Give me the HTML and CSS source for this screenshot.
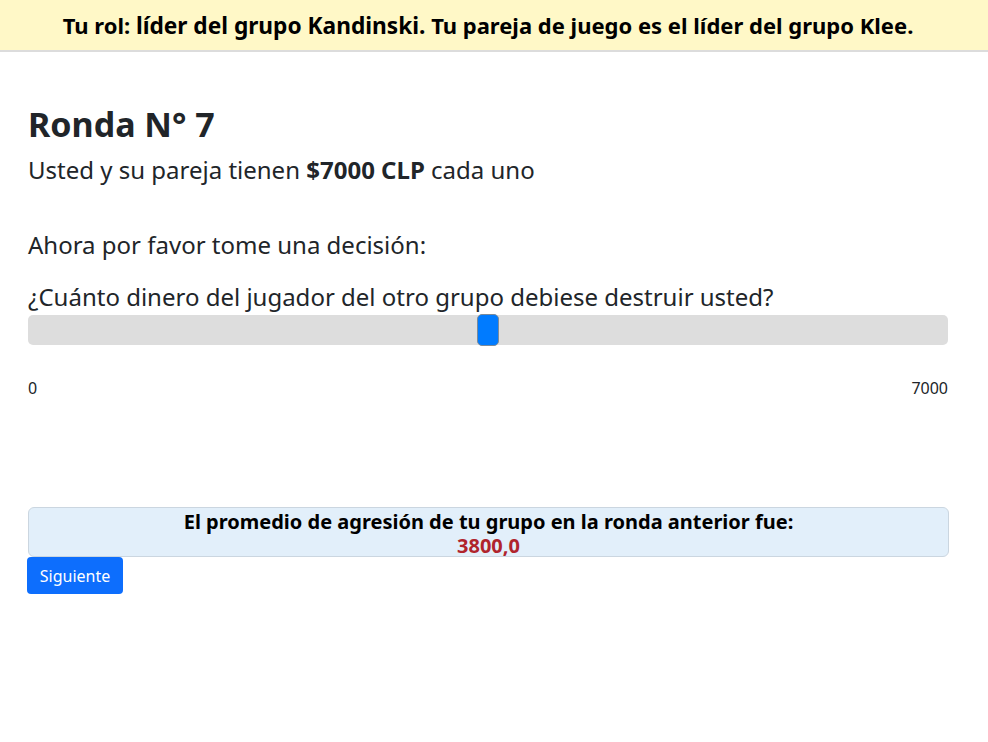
FILE: index.html
```html
<!DOCTYPE html>
<html lang="es">
<head>
<meta charset="utf-8">
<link rel="stylesheet" href="styles.css">
</head>
<body>
<header class="banner">
  <p class="banner-text">Tu rol: <strong class="role">líder del grupo Kandinski.</strong> Tu pareja de juego es el líder del grupo Klee.</p>
</header>
<main class="content">
  <h2 class="title">Ronda N° 7</h2>
  <p class="lead first">Usted y su pareja tienen <strong>$7000 CLP</strong> cada uno</p>
  <p class="lead prompt">Ahora por favor tome una decisión:</p>
  <p class="lead question">¿Cuánto dinero del jugador del otro grupo debiese destruir usted?</p>
  <div class="slider">
    <div class="track"></div>
    <div class="thumb" style="left: calc(50% - 11px);"></div>
  </div>
  <div class="scale"><span>0</span><span>7000</span></div>
  <div class="result">
    <div class="result-label">El promedio de agresión de tu grupo en la ronda anterior fue:</div>
    <div class="result-value">3800,0</div>
  </div>
  <button class="btn">Siguiente</button>
</main>
</body>
</html>
```
FILE: styles.css
```css
* { box-sizing: border-box; }
html, body { margin: 0; padding: 0; }
body {
  font-family: "Noto Sans", "Open Sans", sans-serif;
  color: #212529;
  background: #fff;
  width: 988px;
}
.banner {
  background: #fff8c7;
  border-bottom: 2px solid #dcdcdc;
  height: 52px;
  padding-right: 12px;
  display: flex;
  align-items: center;
  justify-content: center;
}
.banner-text {
  margin: 0;
  font-size: 22px;
  font-weight: 700;
  color: #000;
}
.role { font-weight: 700; font-size: 22.7px; }
.content {
  padding: 50px 40px 0 28px;
}
.title {
  margin: 0;
  font-size: 34px;
  font-weight: 700;
  line-height: 44px;
}
.lead {
  margin: 0;
  font-size: 24px;
  line-height: 32px;
}
.first { margin-top: 8px; }
.prompt { margin-top: 43px; }
.question { margin-top: 20px; }
.slider {
  position: relative;
  width: 920px;
  height: 32px;
  margin-top: 1px;
}
.track {
  position: absolute;
  left: 0; right: 0; top: 1px;
  height: 30px;
  background: #dddddd;
  border-radius: 5px;
}
.thumb {
  position: absolute;
  top: 0;
  width: 22px;
  height: 32px;
  background: #007bff;
  border: 1px solid #7a8a9a;
  border-radius: 5px;
}
.scale {
  width: 920px;
  display: flex;
  justify-content: space-between;
  font-size: 16px;
  margin-top: 31px;
  line-height: 22px;
}
.result {
  width: 921px;
  margin-top: 108px;
  background: #e2effa;
  border: 1px solid #cbd6e0;
  border-radius: 6px;
  text-align: center;
  padding: 1px 0 0;
  height: 50px;
  font-weight: 700;
  font-size: 20px;
  line-height: 25px;
  color: #000;
}
.result-value { color: #b0242c; line-height: 23px; }
.btn {
  display: block;
  margin-left: -1px;
  background: #0d6efd;
  color: #fff;
  border: none;
  border-radius: 4px;
  font-family: inherit;
  font-size: 16px;
  padding: 0 12px;
  height: 37px;
  width: 96px;
}
```
